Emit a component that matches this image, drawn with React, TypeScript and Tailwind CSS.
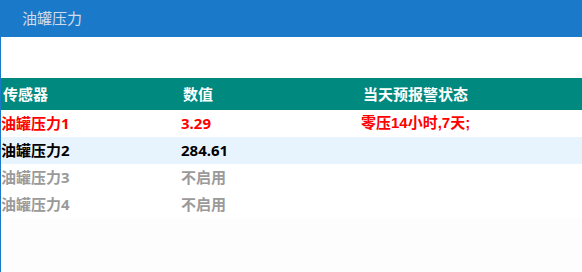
const rows = [
  { name: "油罐压力1", value: "3.29", status: "零压14小时,7天;", tone: "alarm" },
  { name: "油罐压力2", value: "284.61", status: "", tone: "normal" },
  { name: "油罐压力3", value: "不启用", status: "", tone: "off" },
  { name: "油罐压力4", value: "不启用", status: "", tone: "off" },
];

const toneClass: Record<string, string> = {
  alarm: "text-[#ff0000]",
  normal: "text-black",
  off: "text-[#9a9a9a]",
};

export default function App() {
  return (
    <div
      className="w-[582px] h-[272px] flex flex-col bg-[#fdfdfd] overflow-hidden"
      style={{ fontFamily: '"Noto Sans", "Noto Sans CJK SC", sans-serif' }}
    >
      {/* Title bar */}
      <div className="h-[37px] shrink-0 bg-[#1a7ac9] flex items-center pl-[22px]">
        <span className="text-[15px] text-[#d3dbe8]">油罐压力</span>
      </div>

      <div className="flex-1 border-l border-[#1a7ac9] flex flex-col">
        <div className="h-[41px] bg-white" />

        {/* Table header */}
        <div className="h-[32px] bg-[#00897f] grid grid-cols-[180px_180px_1fr] items-center pl-[2px] text-white font-bold text-[15px]">
          <span>传感器</span>
          <span>数值</span>
          <span>当天预报警状态</span>
        </div>

        {rows.map((r, i) => (
          <div
            key={r.name}
            className={`h-[27px] grid grid-cols-[180px_180px_1fr] items-center text-[15px] font-bold ${
              i === 1 ? "bg-[#e8f4fd]" : "bg-white"
            } ${toneClass[r.tone]}`}
          >
            <span>{r.name}</span>
            <span>{r.value}</span>
            <span style={{ fontFamily: '"Liberation Sans", "Noto Sans CJK SC", sans-serif' }}>
              {r.status}
            </span>
          </div>
        ))}
      </div>
    </div>
  );
}
